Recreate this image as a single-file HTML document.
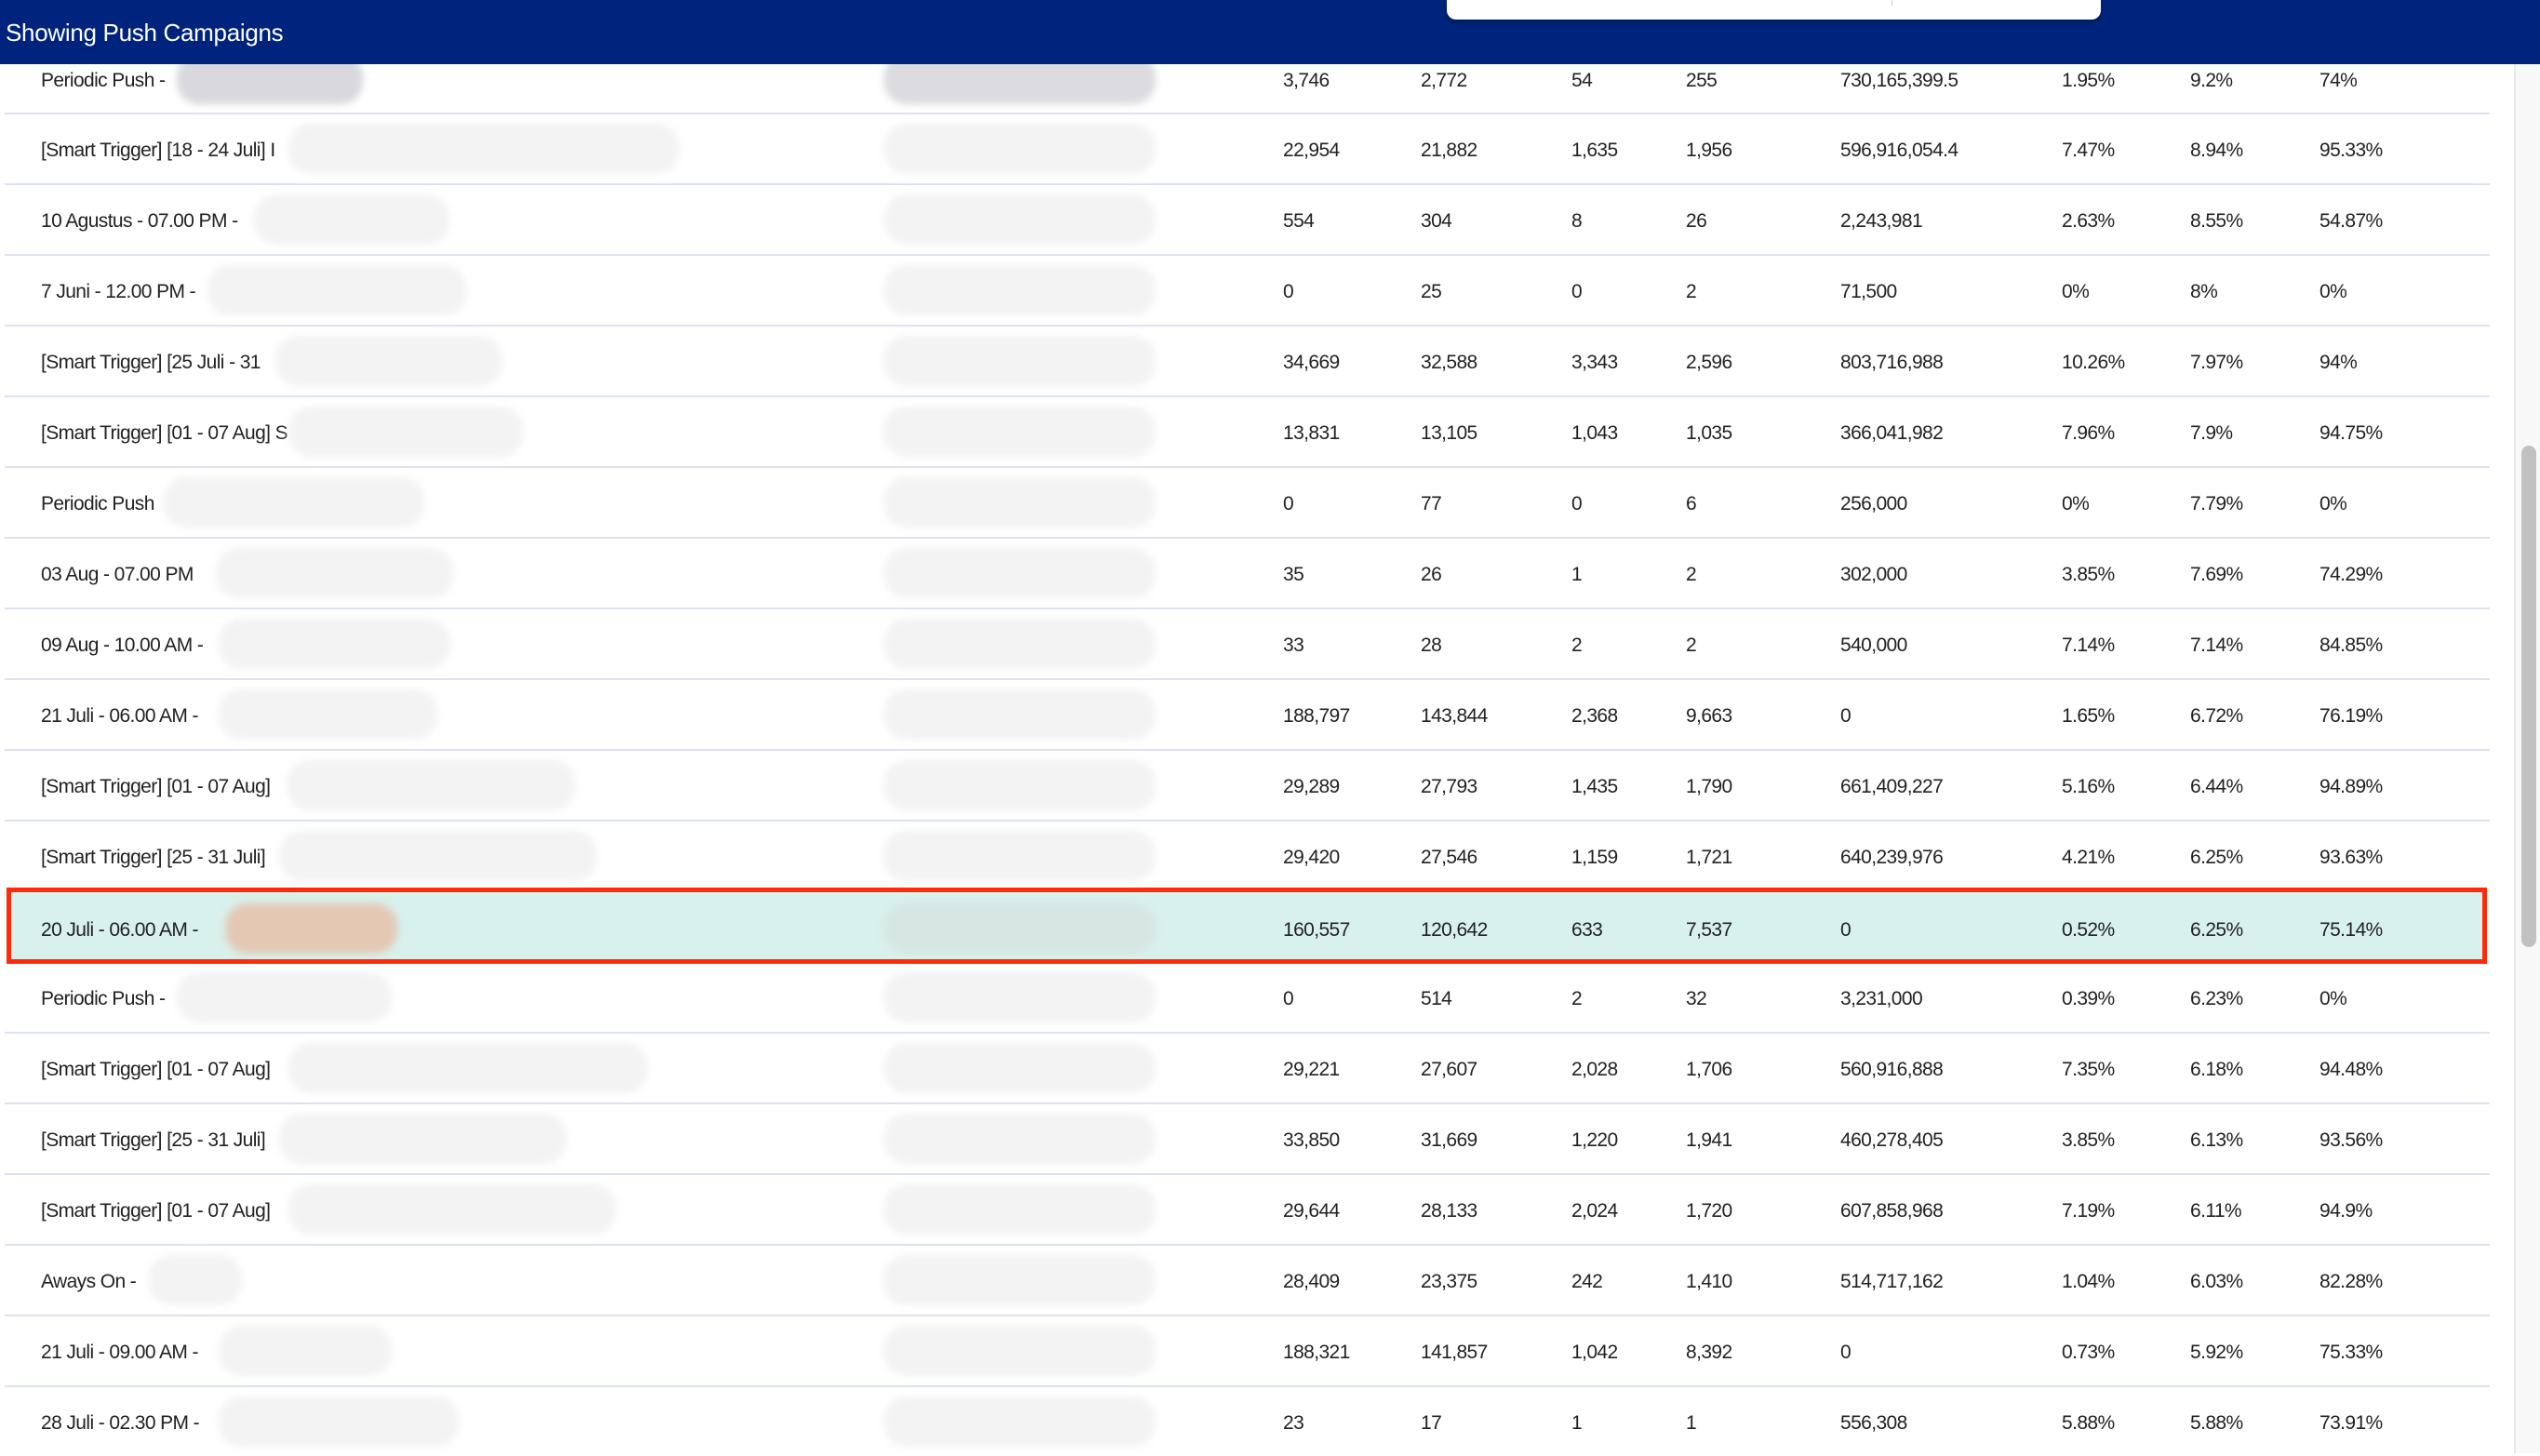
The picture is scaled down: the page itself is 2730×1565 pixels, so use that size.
<!DOCTYPE html>
<html><head><meta charset="utf-8"><style>
html,body{margin:0;padding:0;width:2730px;height:1562px;overflow:hidden;background:#fff;font-family:"Liberation Sans",sans-serif;}
.hdr{position:absolute;left:0;top:0;width:2730px;height:69px;background:#00247d;}
.hdr .t{position:absolute;left:6px;top:20px;color:#fff;font-size:26px;letter-spacing:-0.3px;}
.box{position:absolute;left:1555px;top:0;width:703px;height:21px;background:#fff;border-radius:0 0 10px 10px;box-shadow:0 3px 6px rgba(0,0,0,.3);}
.box:after{content:"";position:absolute;left:478px;top:0;width:1px;height:6px;background:#ccc;}
.row{position:absolute;left:0;width:2690px;height:76px;}
.sep{position:absolute;left:5px;width:2671px;height:2px;background:#dde2ef;}
.c{position:absolute;top:29px;font-size:21px;color:#222;letter-spacing:-0.6px;white-space:nowrap;}
.bl{position:absolute;top:12px;height:54px;border-radius:24px;background:#f3f3f3;filter:blur(4px);}
.b2{left:950px;width:292px;}
.sb{position:absolute;left:2702px;top:69px;width:28px;height:1493px;background:#f8f8f8;border-left:2px solid #e9e9e9;}
.th{position:absolute;left:2710px;top:479px;width:16px;height:539px;background:#c1c1c1;border-radius:8px;}
.hl{position:absolute;left:7px;top:954px;width:2656px;height:72px;border:5px solid #ff2a0a;background:#d8f1ec;}
</style></head><body>
<div class="sb"></div><div class="th"></div>
<div class="hl"></div>

<div class="sep" style="top:121px"></div><div class="sep" style="top:197px"></div><div class="sep" style="top:273px"></div><div class="sep" style="top:349px"></div><div class="sep" style="top:425px"></div><div class="sep" style="top:501px"></div><div class="sep" style="top:577px"></div><div class="sep" style="top:653px"></div><div class="sep" style="top:729px"></div><div class="sep" style="top:805px"></div><div class="sep" style="top:881px"></div><div class="sep" style="top:1109px"></div><div class="sep" style="top:1185px"></div><div class="sep" style="top:1261px"></div><div class="sep" style="top:1337px"></div><div class="sep" style="top:1413px"></div><div class="sep" style="top:1489px"></div>

<div class="row" style="top:46px"><div class="c" style="left:44px">Periodic Push -</div><div class="bl" style="left:190px;width:200px;background:#d8d8de"></div><div class="bl b2" style="background:#dcdce0"></div><div class="c" style="left:1379px">3,746</div><div class="c" style="left:1527px">2,772</div><div class="c" style="left:1689px">54</div><div class="c" style="left:1812px">255</div><div class="c" style="left:1978px">730,165,399.5</div><div class="c" style="left:2216px">1.95%</div><div class="c" style="left:2354px">9.2%</div><div class="c" style="left:2493px">74%</div></div>
<div class="row" style="top:121px"><div class="c" style="left:44px">[Smart Trigger] [18 - 24 Juli] I</div><div class="bl" style="left:310px;width:420px"></div><div class="bl b2"></div><div class="c" style="left:1379px">22,954</div><div class="c" style="left:1527px">21,882</div><div class="c" style="left:1689px">1,635</div><div class="c" style="left:1812px">1,956</div><div class="c" style="left:1978px">596,916,054.4</div><div class="c" style="left:2216px">7.47%</div><div class="c" style="left:2354px">8.94%</div><div class="c" style="left:2493px">95.33%</div></div>
<div class="row" style="top:197px"><div class="c" style="left:44px">10 Agustus - 07.00 PM -</div><div class="bl" style="left:273px;width:210px"></div><div class="bl b2"></div><div class="c" style="left:1379px">554</div><div class="c" style="left:1527px">304</div><div class="c" style="left:1689px">8</div><div class="c" style="left:1812px">26</div><div class="c" style="left:1978px">2,243,981</div><div class="c" style="left:2216px">2.63%</div><div class="c" style="left:2354px">8.55%</div><div class="c" style="left:2493px">54.87%</div></div>
<div class="row" style="top:273px"><div class="c" style="left:44px">7 Juni - 12.00 PM -</div><div class="bl" style="left:223px;width:278px"></div><div class="bl b2"></div><div class="c" style="left:1379px">0</div><div class="c" style="left:1527px">25</div><div class="c" style="left:1689px">0</div><div class="c" style="left:1812px">2</div><div class="c" style="left:1978px">71,500</div><div class="c" style="left:2216px">0%</div><div class="c" style="left:2354px">8%</div><div class="c" style="left:2493px">0%</div></div>
<div class="row" style="top:349px"><div class="c" style="left:44px">[Smart Trigger] [25 Juli - 31</div><div class="bl" style="left:296px;width:244px"></div><div class="bl b2"></div><div class="c" style="left:1379px">34,669</div><div class="c" style="left:1527px">32,588</div><div class="c" style="left:1689px">3,343</div><div class="c" style="left:1812px">2,596</div><div class="c" style="left:1978px">803,716,988</div><div class="c" style="left:2216px">10.26%</div><div class="c" style="left:2354px">7.97%</div><div class="c" style="left:2493px">94%</div></div>
<div class="row" style="top:425px"><div class="c" style="left:44px">[Smart Trigger] [01 - 07 Aug] S</div><div class="bl" style="left:310px;width:252px"></div><div class="bl b2"></div><div class="c" style="left:1379px">13,831</div><div class="c" style="left:1527px">13,105</div><div class="c" style="left:1689px">1,043</div><div class="c" style="left:1812px">1,035</div><div class="c" style="left:1978px">366,041,982</div><div class="c" style="left:2216px">7.96%</div><div class="c" style="left:2354px">7.9%</div><div class="c" style="left:2493px">94.75%</div></div>
<div class="row" style="top:501px"><div class="c" style="left:44px">Periodic Push</div><div class="bl" style="left:176px;width:280px"></div><div class="bl b2"></div><div class="c" style="left:1379px">0</div><div class="c" style="left:1527px">77</div><div class="c" style="left:1689px">0</div><div class="c" style="left:1812px">6</div><div class="c" style="left:1978px">256,000</div><div class="c" style="left:2216px">0%</div><div class="c" style="left:2354px">7.79%</div><div class="c" style="left:2493px">0%</div></div>
<div class="row" style="top:577px"><div class="c" style="left:44px">03 Aug - 07.00 PM</div><div class="bl" style="left:232px;width:255px"></div><div class="bl b2"></div><div class="c" style="left:1379px">35</div><div class="c" style="left:1527px">26</div><div class="c" style="left:1689px">1</div><div class="c" style="left:1812px">2</div><div class="c" style="left:1978px">302,000</div><div class="c" style="left:2216px">3.85%</div><div class="c" style="left:2354px">7.69%</div><div class="c" style="left:2493px">74.29%</div></div>
<div class="row" style="top:653px"><div class="c" style="left:44px">09 Aug - 10.00 AM -</div><div class="bl" style="left:235px;width:249px"></div><div class="bl b2"></div><div class="c" style="left:1379px">33</div><div class="c" style="left:1527px">28</div><div class="c" style="left:1689px">2</div><div class="c" style="left:1812px">2</div><div class="c" style="left:1978px">540,000</div><div class="c" style="left:2216px">7.14%</div><div class="c" style="left:2354px">7.14%</div><div class="c" style="left:2493px">84.85%</div></div>
<div class="row" style="top:729px"><div class="c" style="left:44px">21 Juli - 06.00 AM -</div><div class="bl" style="left:235px;width:235px"></div><div class="bl b2"></div><div class="c" style="left:1379px">188,797</div><div class="c" style="left:1527px">143,844</div><div class="c" style="left:1689px">2,368</div><div class="c" style="left:1812px">9,663</div><div class="c" style="left:1978px">0</div><div class="c" style="left:2216px">1.65%</div><div class="c" style="left:2354px">6.72%</div><div class="c" style="left:2493px">76.19%</div></div>
<div class="row" style="top:805px"><div class="c" style="left:44px">[Smart Trigger] [01 - 07 Aug]</div><div class="bl" style="left:308px;width:310px"></div><div class="bl b2"></div><div class="c" style="left:1379px">29,289</div><div class="c" style="left:1527px">27,793</div><div class="c" style="left:1689px">1,435</div><div class="c" style="left:1812px">1,790</div><div class="c" style="left:1978px">661,409,227</div><div class="c" style="left:2216px">5.16%</div><div class="c" style="left:2354px">6.44%</div><div class="c" style="left:2493px">94.89%</div></div>
<div class="row" style="top:881px"><div class="c" style="left:44px">[Smart Trigger] [25 - 31 Juli]</div><div class="bl" style="left:300px;width:341px"></div><div class="bl b2"></div><div class="c" style="left:1379px">29,420</div><div class="c" style="left:1527px">27,546</div><div class="c" style="left:1689px">1,159</div><div class="c" style="left:1812px">1,721</div><div class="c" style="left:1978px">640,239,976</div><div class="c" style="left:2216px">4.21%</div><div class="c" style="left:2354px">6.25%</div><div class="c" style="left:2493px">93.63%</div></div>
<div class="row" style="top:959px"><div class="c" style="left:44px">20 Juli - 06.00 AM -</div><div class="bl" style="left:242px;width:185px;background:#e4c8b4"></div><div class="bl b2" style="background:#d6e6e3"></div><div class="c" style="left:1379px">160,557</div><div class="c" style="left:1527px">120,642</div><div class="c" style="left:1689px">633</div><div class="c" style="left:1812px">7,537</div><div class="c" style="left:1978px">0</div><div class="c" style="left:2216px">0.52%</div><div class="c" style="left:2354px">6.25%</div><div class="c" style="left:2493px">75.14%</div></div>
<div class="row" style="top:1033px"><div class="c" style="left:44px">Periodic Push -</div><div class="bl" style="left:190px;width:231px"></div><div class="bl b2"></div><div class="c" style="left:1379px">0</div><div class="c" style="left:1527px">514</div><div class="c" style="left:1689px">2</div><div class="c" style="left:1812px">32</div><div class="c" style="left:1978px">3,231,000</div><div class="c" style="left:2216px">0.39%</div><div class="c" style="left:2354px">6.23%</div><div class="c" style="left:2493px">0%</div></div>
<div class="row" style="top:1109px"><div class="c" style="left:44px">[Smart Trigger] [01 - 07 Aug]</div><div class="bl" style="left:310px;width:386px"></div><div class="bl b2"></div><div class="c" style="left:1379px">29,221</div><div class="c" style="left:1527px">27,607</div><div class="c" style="left:1689px">2,028</div><div class="c" style="left:1812px">1,706</div><div class="c" style="left:1978px">560,916,888</div><div class="c" style="left:2216px">7.35%</div><div class="c" style="left:2354px">6.18%</div><div class="c" style="left:2493px">94.48%</div></div>
<div class="row" style="top:1185px"><div class="c" style="left:44px">[Smart Trigger] [25 - 31 Juli]</div><div class="bl" style="left:300px;width:309px"></div><div class="bl b2"></div><div class="c" style="left:1379px">33,850</div><div class="c" style="left:1527px">31,669</div><div class="c" style="left:1689px">1,220</div><div class="c" style="left:1812px">1,941</div><div class="c" style="left:1978px">460,278,405</div><div class="c" style="left:2216px">3.85%</div><div class="c" style="left:2354px">6.13%</div><div class="c" style="left:2493px">93.56%</div></div>
<div class="row" style="top:1261px"><div class="c" style="left:44px">[Smart Trigger] [01 - 07 Aug]</div><div class="bl" style="left:310px;width:352px"></div><div class="bl b2"></div><div class="c" style="left:1379px">29,644</div><div class="c" style="left:1527px">28,133</div><div class="c" style="left:1689px">2,024</div><div class="c" style="left:1812px">1,720</div><div class="c" style="left:1978px">607,858,968</div><div class="c" style="left:2216px">7.19%</div><div class="c" style="left:2354px">6.11%</div><div class="c" style="left:2493px">94.9%</div></div>
<div class="row" style="top:1337px"><div class="c" style="left:44px">Aways On -</div><div class="bl" style="left:160px;width:100px"></div><div class="bl b2"></div><div class="c" style="left:1379px">28,409</div><div class="c" style="left:1527px">23,375</div><div class="c" style="left:1689px">242</div><div class="c" style="left:1812px">1,410</div><div class="c" style="left:1978px">514,717,162</div><div class="c" style="left:2216px">1.04%</div><div class="c" style="left:2354px">6.03%</div><div class="c" style="left:2493px">82.28%</div></div>
<div class="row" style="top:1413px"><div class="c" style="left:44px">21 Juli - 09.00 AM -</div><div class="bl" style="left:235px;width:186px"></div><div class="bl b2"></div><div class="c" style="left:1379px">188,321</div><div class="c" style="left:1527px">141,857</div><div class="c" style="left:1689px">1,042</div><div class="c" style="left:1812px">8,392</div><div class="c" style="left:1978px">0</div><div class="c" style="left:2216px">0.73%</div><div class="c" style="left:2354px">5.92%</div><div class="c" style="left:2493px">75.33%</div></div>
<div class="row" style="top:1489px"><div class="c" style="left:44px">28 Juli - 02.30 PM -</div><div class="bl" style="left:235px;width:258px"></div><div class="bl b2"></div><div class="c" style="left:1379px">23</div><div class="c" style="left:1527px">17</div><div class="c" style="left:1689px">1</div><div class="c" style="left:1812px">1</div><div class="c" style="left:1978px">556,308</div><div class="c" style="left:2216px">5.88%</div><div class="c" style="left:2354px">5.88%</div><div class="c" style="left:2493px">73.91%</div></div>

<div class="hdr"><div class="t">Showing Push Campaigns</div><div class="box"></div></div>
</body></html>
